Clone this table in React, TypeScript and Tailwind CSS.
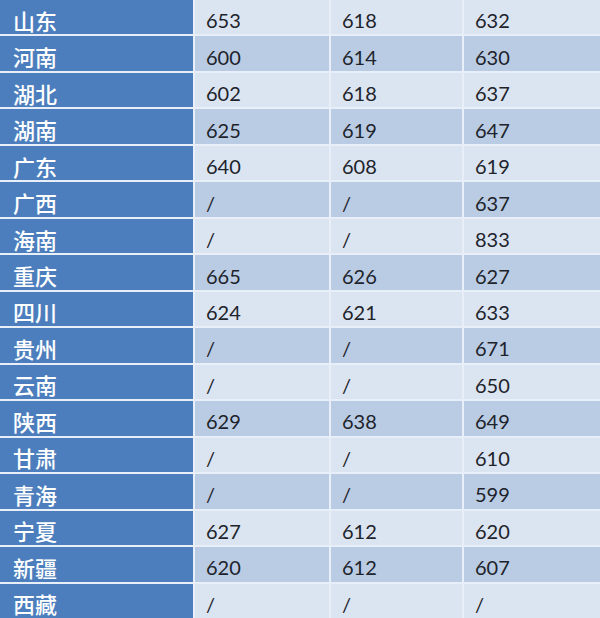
const rows: [string, string, string, string][] = [
  ['山东', '653', '618', '632'],
  ['河南', '600', '614', '630'],
  ['湖北', '602', '618', '637'],
  ['湖南', '625', '619', '647'],
  ['广东', '640', '608', '619'],
  ['广西', '/', '/', '637'],
  ['海南', '/', '/', '833'],
  ['重庆', '665', '626', '627'],
  ['四川', '624', '621', '633'],
  ['贵州', '/', '/', '671'],
  ['云南', '/', '/', '650'],
  ['陕西', '629', '638', '649'],
  ['甘肃', '/', '/', '610'],
  ['青海', '/', '/', '599'],
  ['宁夏', '627', '612', '620'],
  ['新疆', '620', '612', '607'],
  ['西藏', '/', '/', '/'],
];

export default function App() {
  return (
    <div className="w-[600px] h-[618px] overflow-hidden bg-[#e9eff8] flex flex-col gap-[2px]">
      {rows.map((r, i) => {
        const cell = i % 2 === 0 ? 'bg-[#dbe5f1]' : 'bg-[#b9cce4]';
        return (
          <div key={r[0]} className="flex-1 grid grid-cols-[193px_134px_131px_1fr] gap-x-[2px]">
            <div
              className="bg-[#4c7ebd] text-white flex items-center pl-[13px] pt-[5px] text-[22px] font-medium leading-none"
              style={{ fontFamily: '"Noto Sans CJK SC", sans-serif' }}
            >
              {r[0]}
            </div>
            {r.slice(1).map((v, j) => (
              <div
                key={j}
                className={`${cell} flex items-center pl-[11px] pt-[6px] text-[20px] leading-none text-[#1e232b]`}
                style={{ fontFamily: 'Lato, sans-serif' }}
              >
                {v}
              </div>
            ))}
          </div>
        );
      })}
    </div>
  );
}
